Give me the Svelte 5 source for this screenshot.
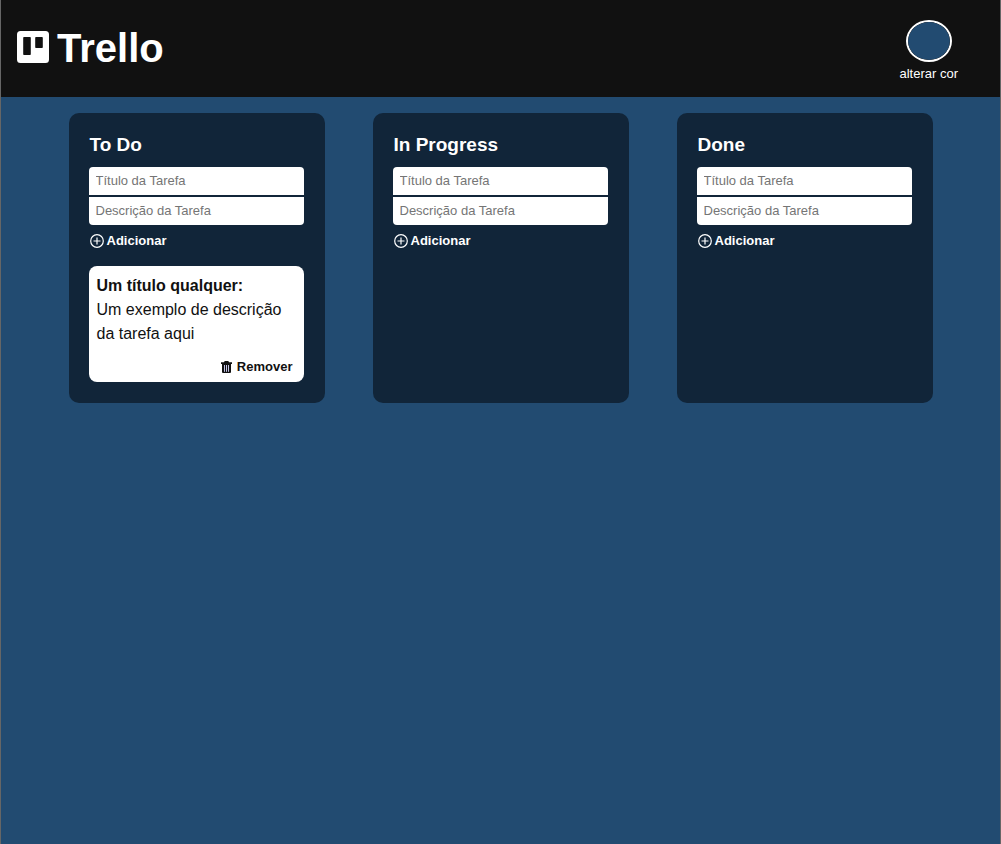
<script>
  let columns = $state([
    {
      id: 'todo',
      name: 'To Do',
      tasks: [{ title: 'Um título qualquer:', text: 'Um exemplo de descrição da tarefa aqui' }]
    },
    { id: 'progress', name: 'In Progress', tasks: [] },
    { id: 'done', name: 'Done', tasks: [] }
  ]);
  let drafts = $state([
    { title: '', text: '' },
    { title: '', text: '' },
    { title: '', text: '' }
  ]);
  let color = $state('#224b71');

  function add(event, i) {
    event.preventDefault();
    if (!drafts[i].title) return;
    columns[i].tasks.push({ title: drafts[i].title + ':', text: drafts[i].text });
    drafts[i] = { title: '', text: '' };
  }
</script>

<div class="page" style:background-color={color}>
  <header>
    <h1>
      <svg class="logo" viewBox="0 0 32 32" aria-hidden="true">
        <path
          fill="#fff"
          fill-rule="evenodd"
          d="M3.500 0h25a3.500 3.500 0 0 1 3.500 3.500v25a3.500 3.500 0 0 1-3.500 3.500h-25a3.500 3.500 0 0 1-3.500-3.500v-25a3.500 3.500 0 0 1 3.500-3.500zM7 6a.8.8 0 0 0-.8.8v16.400a.8.8 0 0 0 .8.8h6a.8.8 0 0 0 .8-.8V6.800a.8.8 0 0 0-.8-.8zM19 6a.8.8 0 0 0-.8.8v9.400a.8.8 0 0 0 .8.8h6a.8.8 0 0 0 .8-.8V6.800a.8.8 0 0 0-.8-.8z"
        />
      </svg>
      Trello
    </h1>
    <label class="picker">
      <input type="color" bind:value={color} />
      <span>alterar cor</span>
    </label>
  </header>

  <main>
    {#each columns as column, i (column.id)}
      <section>
        <h2>{column.name}</h2>
        <form onsubmit={(e) => add(e, i)}>
          <input type="text" aria-label="Título da Tarefa" placeholder="Título da Tarefa" bind:value={drafts[i].title} />
          <input type="text" aria-label="Descrição da Tarefa" placeholder="Descrição da Tarefa" bind:value={drafts[i].text} />
          <button class="add" type="submit">
            <svg viewBox="0 0 14 14" width="14" height="14" fill="none" stroke="#fff" aria-hidden="true">
              <circle cx="7" cy="7" r="6.300" stroke-width="1.200" />
              <path d="M7 3.500v7M3.500 7h7" stroke-width="1.200" />
            </svg>
            Adicionar
          </button>
        </form>
        {#each column.tasks as task, t}
          <article>
            <h3>{task.title}</h3>
            <p>{task.text}</p>
            <button class="remove" type="button" onclick={() => column.tasks.splice(t, 1)}>
              <svg viewBox="0 0 11 12" width="11" height="12" aria-hidden="true">
                <path fill="#111" d="M0 1.300h3L3.700 0h3.600L8 1.300h3v1.700H0zM1 3h9v8a1 1 0 0 1-1 1H2a1 1 0 0 1-1-1z" />
                <path stroke="#d8d8ff" stroke-width="0.900" d="M3.500 4v6.800M5.500 4v6.800M7.500 4v6.800" />
              </svg>
              Remover
            </button>
          </article>
        {/each}
      </section>
    {/each}
  </main>
</div>

<style>
  :global(body) {
    margin: 0;
  }
  .page,
  .page * {
    box-sizing: border-box;
  }
  .page {
    min-height: 100vh;
    border: solid #666;
    border-width: 0 1px;
    font-family: 'Liberation Sans', Arial, sans-serif;
  }
  header {
    display: flex;
    justify-content: space-between;
    align-items: center;
    padding: 16px 42px 16px 16px;
    background: #111;
    color: #fff;
  }
  h1,
  h2,
  h3,
  p {
    margin: 0;
  }
  h1 {
    display: flex;
    align-items: center;
    gap: 8px;
    padding-bottom: 2px;
    font-size: 40px;
    line-height: 48px;
  }
  .logo {
    width: 32px;
    height: 32px;
    margin-bottom: 2px;
  }
  .picker {
    display: flex;
    flex-direction: column;
    align-items: center;
    gap: 4px;
    padding-top: 4px;
    font-size: 13px;
    line-height: 15px;
    cursor: pointer;
  }
  .picker input {
    appearance: none;
    width: 46px;
    height: 42px;
    padding: 0;
    border: 2px solid #fff;
    border-radius: 50%;
    background: none;
    overflow: hidden;
    cursor: pointer;
  }
  .picker input::-webkit-color-swatch-wrapper {
    padding: 0;
  }
  .picker input::-webkit-color-swatch {
    border: 0;
    border-radius: 50%;
  }
  main {
    display: flex;
    flex-wrap: wrap;
    justify-content: center;
    gap: 48px;
    padding: 16px;
  }
  section {
    width: 256px;
    padding: 20px 21px 21px 20px;
    border-radius: 10px;
    background: #112539;
    color: #fff;
  }
  h2 {
    margin-bottom: 10px;
    padding-left: 1px;
    font-size: 19px;
    line-height: 24px;
  }
  form {
    display: flex;
    flex-direction: column;
    gap: 2px;
  }
  form input {
    width: 100%;
    height: 28px;
    padding: 0 7px 2px;
    border: 0;
    border-radius: 4px 4px 0 0;
    background: #fff;
    color: #111;
    font: 13px 'Liberation Sans', Arial, sans-serif;
  }
  form input + input {
    border-radius: 0 0 4px 4px;
  }
  form input::placeholder {
    color: #757575;
  }
  button {
    display: flex;
    align-items: center;
    padding: 0;
    border: 0;
    background: none;
    font: bold 13px/16px 'Liberation Sans', Arial, sans-serif;
    cursor: pointer;
  }
  .add {
    gap: 3px;
    align-self: flex-start;
    margin-top: 6px;
    padding: 0 1px;
    color: #fff;
  }
  article {
    margin-top: 17px;
    padding: 8px 8px 7px;
    border-radius: 8px;
    background: #fff;
    color: #111;
    font-size: 16px;
    line-height: 24px;
  }
  h3 {
    font-size: 16px;
  }
  .remove {
    gap: 5px;
    margin: 13px 3px 0 auto;
    color: #111;
  }
</style>
